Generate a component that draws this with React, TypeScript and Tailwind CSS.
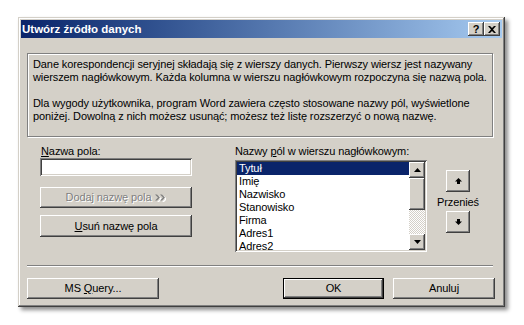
const face = "bg-[#d4d0c8]";
const raised =
  "shadow-[inset_-1px_-1px_0_#404040,inset_1px_1px_0_#ffffff,inset_-2px_-2px_0_#808080,inset_2px_2px_0_#d4d0c8]";
const sunken =
  "shadow-[inset_1px_1px_0_#808080,inset_-1px_-1px_0_#ffffff,inset_2px_2px_0_#404040,inset_-2px_-2px_0_#d4d0c8]";

const Btn: React.FC<{ className?: string; children: React.ReactNode; isDefault?: boolean; disabled?: boolean }> = ({
  className = "",
  children,
  isDefault,
  disabled,
}) => {
  return (
    <div
      className={`${face} flex items-center justify-center ${isDefault ? "border border-black" : ""} ${className}`}
    >
      <div
        className={`w-full h-full flex items-center justify-center ${raised} ${
          disabled ? "text-[#808080] [text-shadow:1px_1px_0_#ffffff]" : "text-black"
        }`}
      >
        {children}
      </div>
    </div>
  );
};

const ArrowUp = () => (
  <svg width="7" height="6" viewBox="0 0 7 6">
    <polygon points="3.5,0 7,3.5 0,3.5" fill="#000" />
    <rect x="2" y="3" width="3" height="3" fill="#000" />
  </svg>
);

const ArrowDown = () => (
  <svg width="7" height="6" viewBox="0 0 7 6">
    <rect x="2" y="0" width="3" height="3" fill="#000" />
    <polygon points="0,2.5 7,2.5 3.5,6" fill="#000" />
  </svg>
);

const Tri: React.FC<{ down?: boolean }> = ({ down }) => (
  <svg width="7" height="4" viewBox="0 0 7 4">
    <polygon points={down ? "0,0 7,0 3.5,4" : "3.5,0 7,4 0,4"} fill="#000" />
  </svg>
);

// the ">>" glyph of the disabled button, grey with a white emboss
const Chevrons = () => (
  <svg width="11" height="8" viewBox="0 0 11 8" className="ml-[4px]">
    <path d="M1 1h2l3 3-3 3H1l3-3zM6 1h2l3 3-3 3H6l3-3z" fill="#ffffff" transform="translate(1 1)" />
    <path d="M0 0h2l3 3-3 3H0l3-3zM5 0h2l3 3-3 3H5l3-3z" fill="#808080" transform="translate(0 0.5)" />
  </svg>
);

const fields = ["Tytuł", "Imię", "Nazwisko", "Stanowisko", "Firma", "Adres1", "Adres2"];

export default function App() {
  return (
    <div
      className="w-[524px] h-[325px] bg-white pt-[17px] pl-[18px] text-[11px] leading-[13px] tracking-[-0.1px] text-black"
      style={{ fontFamily: '"Liberation Sans", Arial, sans-serif' }}
    >
      <div
        className={`w-[487px] h-[290px] ${face} p-[3px] flex flex-col shadow-[inset_-1px_-1px_0_#404040,inset_1px_1px_0_#d4d0c8,inset_-2px_-2px_0_#808080,inset_2px_2px_0_#ffffff,3px_3px_4px_rgba(0,0,0,0.45)]`}
      >
        {/* title bar */}
        <div className="h-[18px] flex items-center justify-between bg-gradient-to-r from-[#0a246a] to-[#a6caf0] pl-[1px] pr-[2px]">
          <span className="text-white font-bold text-[11.5px] tracking-normal">Utwórz źródło danych</span>
          <div className="flex">
            <Btn className="w-[16px] h-[14px]">
              <span className="font-bold text-[11px] leading-none">?</span>
            </Btn>
            <Btn className="w-[16px] h-[14px]">
              <svg width="8" height="7" viewBox="0 0 8 7">
                <path d="M0 0h2l2 2 2-2h2L5 3.5 8 7H6L4 5 2 7H0l3-3.5z" fill="#000" />
              </svg>
            </Btn>
          </div>
        </div>

        <div className="pl-[6px] flex flex-col">
          {/* info box */}
          <div className="mt-[15px] w-[466px] h-[84px] border border-[#808080] shadow-[inset_1px_1px_0_#ffffff,1px_1px_0_#ffffff] pt-[4px] pl-[5px] whitespace-nowrap">
            <p>
              Dane korespondencji seryjnej składają się z wierszy danych. Pierwszy wiersz jest nazywany
              <br />
              wierszem nagłówkowym. Każda kolumna w wierszu nagłówkowym rozpoczyna się nazwą pola.
            </p>
            <p className="mt-[13px]">
              Dla wygody użytkownika, program Word zawiera często stosowane nazwy pól, wyświetlone
              <br />
              poniżej. Dowolną z nich możesz usunąć; możesz też listę rozszerzyć o nową nazwę.
            </p>
          </div>

          {/* middle */}
          <div className="mt-[8px] flex">
            <div className="ml-[13px] w-[152px] flex flex-col">
              <span className="pl-[1px]">
                <u>N</u>azwa pola:
              </span>
              <div className={`h-[18px] bg-white ${sunken}`} />
              <Btn className="mt-[11px] h-[21px]" disabled>
                Dodaj nazwę pola
                <Chevrons />
              </Btn>
              <Btn className="mt-[7px] h-[22px]">
                <span>
                  <u>U</u>suń nazwę pola
                </span>
              </Btn>
            </div>

            <div className="ml-[43px] flex flex-col">
              <span>
                Nazwy <u>p</u>ól w wierszu nagłówkowym:
              </span>
              <div className={`mt-[2px] w-[192px] h-[92px] bg-white ${sunken} p-[2px] flex`}>
                <div className="flex-1 flex flex-col">
                  {fields.map((f, i) => (
                    <div
                      key={f}
                      className={`h-[13px] pl-[2px] ${i === 0 ? "bg-[#0a246a] text-white" : ""}`}
                    >
                      {f}
                    </div>
                  ))}
                </div>
                <div className="w-[16px] flex flex-col">
                  <Btn className="h-[16px]">
                    <Tri />
                  </Btn>
                  <Btn className="h-[32px]">
                    <span />
                  </Btn>
                  <div className="flex-1 bg-[repeating-conic-gradient(#d4d0c8_0_25%,#ffffff_0_50%)] bg-[length:2px_2px]" />
                  <Btn className="h-[16px]">
                    <Tri down />
                  </Btn>
                </div>
              </div>
            </div>

            <div className="ml-[10px] mt-[25px] flex flex-col items-center w-[42px]">
              <Btn className="w-[24px] h-[22px]">
                <ArrowUp />
              </Btn>
              <span className="mt-[4px]">Przenieś</span>
              <Btn className="mt-[2px] w-[24px] h-[22px]">
                <ArrowDown />
              </Btn>
            </div>
          </div>

          {/* separator */}
          <div className="mt-[13px] w-[466px] h-[2px] border-t border-[#808080] border-b border-b-white" />

          {/* bottom buttons */}
          <div className="mt-[11px] flex">
            <Btn className="w-[132px] h-[21px]">
              <span>
                MS <u>Q</u>uery...
              </span>
            </Btn>
            <Btn className="ml-[124px] w-[101px] h-[21px]" isDefault>
              OK
            </Btn>
            <Btn className="ml-[9px] w-[102px] h-[21px]">Anuluj</Btn>
          </div>
        </div>
      </div>
    </div>
  );
}
